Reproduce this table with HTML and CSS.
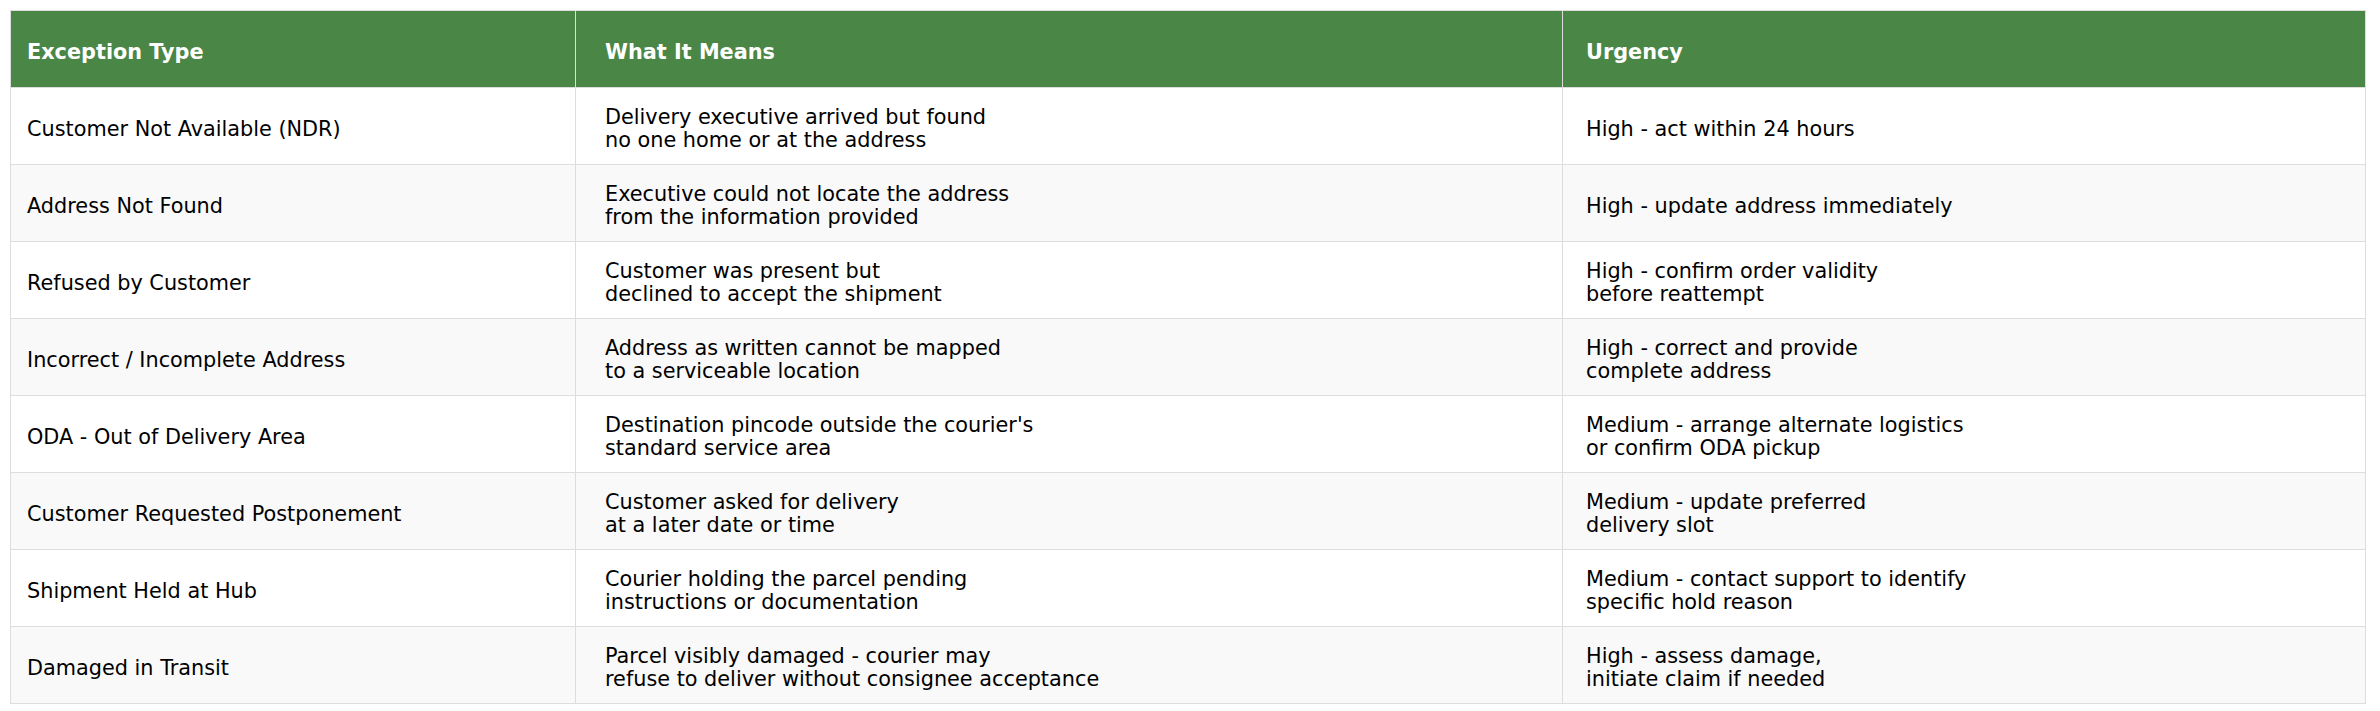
FILE: index.html
```html
<!DOCTYPE html>
<html lang="en">
<head>
<meta charset="utf-8">
<title>Delivery Exceptions</title>
<link rel="stylesheet" href="styles.css">
</head>
<body>
<table class="exceptions">
  <thead>
    <tr>
      <th class="c1">Exception Type</th>
      <th class="c2">What It Means</th>
      <th class="c3">Urgency</th>
    </tr>
  </thead>
  <tbody>
    <tr>
      <td class="c1">Customer Not Available (NDR)</td>
      <td class="c2">Delivery executive arrived but found<br>no one home or at the address</td>
      <td class="c3">High - act within 24 hours</td>
    </tr>
    <tr>
      <td class="c1">Address Not Found</td>
      <td class="c2">Executive could not locate the address<br>from the information provided</td>
      <td class="c3">High - update address immediately</td>
    </tr>
    <tr>
      <td class="c1">Refused by Customer</td>
      <td class="c2">Customer was present but<br>declined to accept the shipment</td>
      <td class="c3">High - confirm order validity<br>before reattempt</td>
    </tr>
    <tr>
      <td class="c1">Incorrect / Incomplete Address</td>
      <td class="c2">Address as written cannot be mapped<br>to a serviceable location</td>
      <td class="c3">High - correct and provide<br>complete address</td>
    </tr>
    <tr>
      <td class="c1">ODA - Out of Delivery Area</td>
      <td class="c2">Destination pincode outside the courier's<br>standard service area</td>
      <td class="c3">Medium - arrange alternate logistics<br>or confirm ODA pickup</td>
    </tr>
    <tr>
      <td class="c1">Customer Requested Postponement</td>
      <td class="c2">Customer asked for delivery<br>at a later date or time</td>
      <td class="c3">Medium - update preferred<br>delivery slot</td>
    </tr>
    <tr>
      <td class="c1">Shipment Held at Hub</td>
      <td class="c2">Courier holding the parcel pending<br>instructions or documentation</td>
      <td class="c3">Medium - contact support to identify<br>specific hold reason</td>
    </tr>
    <tr>
      <td class="c1">Damaged in Transit</td>
      <td class="c2">Parcel visibly damaged - courier may<br>refuse to deliver without consignee acceptance</td>
      <td class="c3">High - assess damage,<br>initiate claim if needed</td>
    </tr>
  </tbody>
</table>
</body>
</html>
```

FILE: styles.css
```css
html, body {
  margin: 0;
  padding: 0;
  background: #ffffff;
}

body {
  padding: 10px 14px 0 10px;
  font-family: "DejaVu Sans", "Liberation Sans", sans-serif;
  font-size: 20.8px;
  line-height: 23px;
  color: #000000;
}

.exceptions {
  width: 100%;
  border-collapse: collapse;
  table-layout: fixed;
}

.exceptions th,
.exceptions td {
  border: 1px solid #dddddd;
  text-align: left;
  vertical-align: middle;
  padding-top: 6px;
  padding-bottom: 0;
}

.exceptions thead tr {
  height: 77px;
}

.exceptions tbody tr {
  height: 77px;
}

.exceptions th {
  background: #4a8646;
  color: #ffffff;
  font-weight: bold;
}

.exceptions tbody tr:nth-child(even) td {
  background: #f9f9f9;
}

.c1 {
  width: 532px;
  padding-left: 16px;
  padding-right: 16px;
}

.c2 {
  width: 941px;
  padding-left: 29px;
  padding-right: 16px;
}

.c3 {
  padding-left: 23px;
  padding-right: 16px;
}
```
